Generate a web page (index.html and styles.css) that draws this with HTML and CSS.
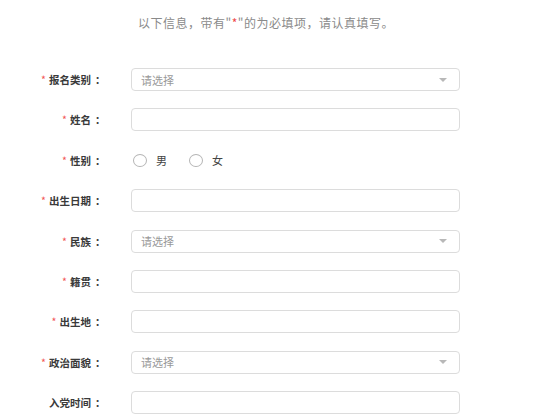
FILE: index.html
```html
<!DOCTYPE html>
<html lang="zh-CN">
<head>
<meta charset="utf-8">
<title>报名信息</title>
<link rel="stylesheet" href="styles.css">
</head>
<body>
<div class="page">
  <p class="notice">以下信息，带有"<span class="star">*</span>"的为必填项，请认真填写。</p>
  <form class="form">
    <div class="row">
      <label class="label"><span class="req">*</span>报名类别<span class="colon">：</span></label>
      <div class="field select"><span class="ph">请选择</span><span class="arrow"></span></div>
    </div>
    <div class="row">
      <label class="label"><span class="req">*</span>姓名<span class="colon">：</span></label>
      <div class="field input"></div>
    </div>
    <div class="row">
      <label class="label"><span class="req">*</span>性别<span class="colon">：</span></label>
      <div class="radios">
        <span class="radio"><span class="circle"></span><span class="rtext">男</span></span>
        <span class="radio"><span class="circle"></span><span class="rtext">女</span></span>
      </div>
    </div>
    <div class="row">
      <label class="label"><span class="req">*</span>出生日期<span class="colon">：</span></label>
      <div class="field input"></div>
    </div>
    <div class="row">
      <label class="label"><span class="req">*</span>民族<span class="colon">：</span></label>
      <div class="field select"><span class="ph">请选择</span><span class="arrow"></span></div>
    </div>
    <div class="row">
      <label class="label"><span class="req">*</span>籍贯<span class="colon">：</span></label>
      <div class="field input"></div>
    </div>
    <div class="row">
      <label class="label"><span class="req">*</span>出生地<span class="colon">：</span></label>
      <div class="field input"></div>
    </div>
    <div class="row">
      <label class="label"><span class="req">*</span>政治面貌<span class="colon">：</span></label>
      <div class="field select"><span class="ph">请选择</span><span class="arrow"></span></div>
    </div>
    <div class="row">
      <label class="label">入党时间<span class="colon">：</span></label>
      <div class="field input"></div>
    </div>
  </form>
</div>
</body>
</html>
```
FILE: styles.css
```css
html, body {
  margin: 0;
  padding: 0;
  background: #ffffff;
}
body {
  font-family: "Noto Sans CJK SC", "Noto Sans", sans-serif;
  color: #333333;
  overflow: hidden;
}
.page {
  width: 554px;
  height: 418px;
}
.notice {
  margin: 0;
  padding: 14px 0 0 138px;
  height: 18px;
  line-height: 18px;
  font-size: 12px;
  letter-spacing: 0.5px;
  color: #8a8a8a;
}
.star {
  color: #f04848;
}
.form {
  display: grid;
  row-gap: 17.375px;
  margin-top: 36px;
}
.row {
  display: flex;
  align-items: center;
  height: 23px;
}
.label {
  width: 108px;
  text-align: right;
  font-size: 10.5px;
  font-weight: bold;
  color: #3a3a3a;
}
.colon {
  display: inline-block;
  width: 13px;
  margin-left: 4px;
  text-align: left;
}
.req {
  color: #f25656;
  font-weight: normal;
  margin-right: 3px;
}
.field {
  box-sizing: border-box;
  margin-left: 23px;
  width: 329px;
  height: 23px;
  border: 1px solid #dcdcdc;
  border-radius: 4px;
  background: #fff;
}
.select {
  display: flex;
  align-items: center;
  justify-content: space-between;
  padding: 0 12px 0 9px;
}
.ph {
  font-size: 11px;
  color: #999999;
}
.arrow {
  width: 0;
  height: 0;
  border-left: 4px solid transparent;
  border-right: 4px solid transparent;
  border-top: 4px solid #b8b8b8;
}
.radios {
  display: flex;
  align-items: center;
  margin-left: 25px;
  gap: 22px;
}
.radio {
  display: flex;
  align-items: center;
}
.circle {
  box-sizing: border-box;
  width: 14px;
  height: 13px;
  border: 1px solid #b5b5b5;
  border-radius: 50%;
  margin-right: 9px;
}
.rtext {
  font-size: 11px;
  color: #444;
}
```
